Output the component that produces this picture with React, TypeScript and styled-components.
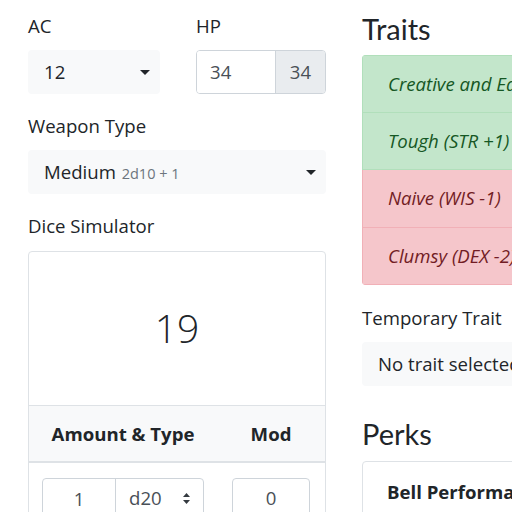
import React from "react";
import styled, { createGlobalStyle } from "styled-components";

const text = `#212529`;
const light = `#f8f9fa`;
const line = `#dee2e6`;

const GlobalStyle = createGlobalStyle`
  html, body {
    margin: 0;
    padding: 0;
    background: #fff;
    overflow: hidden;
  }
  body {
    font-family: "Open Sans", "Liberation Sans", sans-serif;
    color: ${text};
    font-size: 18.6px;
    line-height: 1.5;
  }
  * {
    box-sizing: border-box;
  }
`;

const Page = styled.div`
  width: 700px;
  display: flex;
  gap: 36px;
  padding: 12px 0 0 28px;
`;

const LeftCol = styled.div`
  width: 298px;
  flex-shrink: 0;
  display: flex;
  flex-direction: column;
`;

const RightCol = styled.div`
  width: 320px;
  flex-shrink: 0;
  display: flex;
  flex-direction: column;
`;

const Pair = styled.div`
  display: grid;
  grid-template-columns: 132px 130px;
  gap: 36px;
`;

const Field = styled.div<{ $gap?: number }>`
  display: flex;
  flex-direction: column;
  margin-bottom: ${(p) => p.$gap ?? 18}px;
`;

const Label = styled.div`
  font-size: 18.6px;
  line-height: 27px;
  margin-bottom: 11px;
`;

const SelectBox = styled.div`
  height: 44px;
  background: ${light};
  border-radius: 4px;
  display: flex;
  align-items: center;
  justify-content: space-between;
  padding: 0 10px 0 16px;
  font-size: 18.6px;
`;

const Caret = styled.span`
  width: 0;
  height: 0;
  border-left: 5px solid transparent;
  border-right: 5px solid transparent;
  border-top: 5px solid ${text};
`;

const Hint = styled.span`
  font-size: 14.5px;
  color: #6c757d;
  margin-left: 1px;
`;

const InputGroup = styled.div`
  height: 44px;
  display: flex;
  border: 1px solid #ced4da;
  border-radius: 4px;
  overflow: hidden;
  font-size: 18.6px;
`;

const GroupInput = styled.div`
  flex: 1;
  background: #fff;
  display: flex;
  align-items: center;
  padding-left: 13px;
  color: #495057;
`;

const GroupAddon = styled.div`
  width: 50px;
  background: #e9ecef;
  border-left: 1px solid #ced4da;
  display: flex;
  align-items: center;
  justify-content: center;
  color: #495057;
`;

const Card = styled.div`
  border: 1px solid ${line};
  border-radius: 4px;
  overflow: hidden;
  margin-top: 1px;
`;

const Result = styled.div`
  height: 153px;
  display: flex;
  align-items: center;
  justify-content: center;
  font-size: 39px;
  font-weight: 300;
`;

const TableHead = styled.div`
  display: grid;
  grid-template-columns: 188px 1fr;
  height: 58px;
  align-items: center;
  background: ${light};
  border-top: 1px solid ${line};
  border-bottom: 2px solid ${line};
  font-weight: 700;
  font-size: 18.6px;
  text-align: center;
`;

const TableRow = styled.div`
  display: grid;
  grid-template-columns: 188px 1fr;
  padding: 15px 0 20px;
`;

const Cell = styled.div`
  display: flex;
  justify-content: center;
`;

const DiceGroup = styled.div`
  display: flex;
  width: 162px;
  height: 40px;
  border: 1px solid #ced4da;
  border-radius: 4px;
  overflow: hidden;
`;

const NumInput = styled.div<{ $w: number }>`
  width: ${(p) => p.$w}px;
  height: 40px;
  display: flex;
  align-items: center;
  justify-content: center;
  color: #495057;
`;

const ModInput = styled.div`
  width: 78px;
  height: 40px;
  border: 1px solid #ced4da;
  border-radius: 4px;
  display: flex;
  align-items: center;
  justify-content: center;
  color: #495057;
`;

const DiceSelect = styled.div`
  flex: 1;
  display: flex;
  align-items: center;
  justify-content: space-between;
  padding: 0 12px 0 13px;
  border-left: 1px solid #ced4da;
  color: #495057;
`;

const Heading = styled.h2`
  font-family: "Lato", "Open Sans", sans-serif;
  font-weight: 400;
  font-size: 29px;
  line-height: 34px;
  margin: 0 0 9px;
`;

const TraitList = styled.div`
  border-radius: 4px;
  overflow: hidden;
  margin-bottom: 19px;
`;

const TraitItem = styled.div<{ $good: boolean }>`
  height: 57.5px;
  display: flex;
  align-items: center;
  padding-left: 25px;
  font-style: italic;
  font-size: 18.6px;
  white-space: nowrap;
  background: ${(p) => (p.$good ? "#c3e6cb" : "#f5c6cb")};
  color: ${(p) => (p.$good ? "#155724" : "#721c24")};
  border: 1px solid ${(p) => (p.$good ? "#b1dfbb" : "#f1b0b7")};
  border-top-width: 0;
  &:first-child {
    border-top-width: 1px;
  }
`;

const PerkCard = styled.div`
  border: 1px solid ${line};
  border-radius: 4px;
  padding: 16px 24px;
  height: 80px;
  margin-top: 1px;
`;

const PerkName = styled.div`
  font-weight: 700;
  font-size: 18.6px;
  white-space: nowrap;
`;

const Arrows = () => (
  <svg width="9" height="13" viewBox="0 0 9 13">
    <path d="M4.5 1 L8 5 L1 5 Z" fill="#343a40" />
    <path d="M4.5 12 L8 8 L1 8 Z" fill="#343a40" />
  </svg>
);

export default function App() {
  return (
    <>
      <GlobalStyle />
      <Page>
        <LeftCol>
          <Pair>
            <Field>
              <Label>AC</Label>
              <SelectBox>
                <span>12</span>
                <Caret />
              </SelectBox>
            </Field>
            <Field>
              <Label>HP</Label>
              <InputGroup>
                <GroupInput>34</GroupInput>
                <GroupAddon>34</GroupAddon>
              </InputGroup>
            </Field>
          </Pair>
          <Field>
            <Label>Weapon Type</Label>
            <SelectBox>
              <span>
                Medium <Hint>2d10 + 1</Hint>
              </span>
              <Caret />
            </SelectBox>
          </Field>
          <Field>
            <Label>Dice Simulator</Label>
            <Card>
              <Result>19</Result>
              <TableHead>
                <div>Amount &amp; Type</div>
                <div>Mod</div>
              </TableHead>
              <TableRow>
                <Cell>
                  <DiceGroup>
                    <NumInput $w={72}>1</NumInput>
                    <DiceSelect>
                      <span>d20</span>
                      <Arrows />
                    </DiceSelect>
                  </DiceGroup>
                </Cell>
                <Cell>
                  <ModInput>0</ModInput>
                </Cell>
              </TableRow>
            </Card>
          </Field>
        </LeftCol>
        <RightCol>
          <Heading>Traits</Heading>
          <TraitList>
            <TraitItem $good>Creative and Easygoing</TraitItem>
            <TraitItem $good>Tough (STR +1)</TraitItem>
            <TraitItem $good={false}>Naive (WIS -1)</TraitItem>
            <TraitItem $good={false}>Clumsy (DEX -2)</TraitItem>
          </TraitList>
          <Field $gap={31}>
            <Label>Temporary Trait</Label>
            <SelectBox>
              <span>No trait selected</span>
              <Caret />
            </SelectBox>
          </Field>
          <Heading>Perks</Heading>
          <PerkCard>
            <PerkName>Bell Performance</PerkName>
          </PerkCard>
        </RightCol>
      </Page>
    </>
  );
}
